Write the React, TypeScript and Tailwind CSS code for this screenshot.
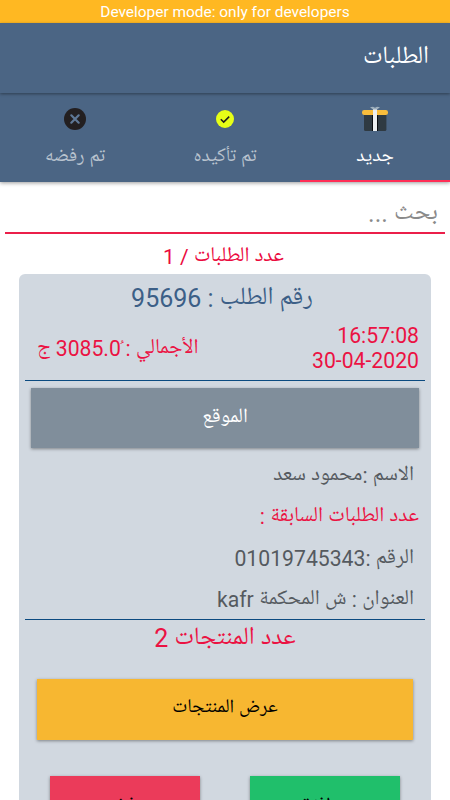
import type { ReactNode } from "react";

function GiftIcon() {
  return (
    <svg width="26" height="26" viewBox="0 0 26 26">
      <rect x="2" y="6" width="22.400" height="19" rx="1.500" fill="#2f3a42" />
      <rect x="0" y="4" width="26" height="5" rx="2.200" fill="#f9bd3c" />
      <rect x="10" y="9" width="6" height="16" fill="#0b0e12" />
      <rect x="11" y="3" width="4" height="22" fill="#eceff1" />
      <path d="M8 1.300l3-.6 2 1.100 2-1.100 3 .6-3 2.200h-4z" fill="#9fb0bd" />
    </svg>
  );
}

function CheckIcon() {
  return (
    <svg width="18" height="18" viewBox="0 0 18 18">
      <circle cx="9" cy="9" r="9" fill="#e6ff17" />
      <path
        d="M4.800 9.200l2.900 2.900 5.500-5.500"
        fill="none"
        stroke="#1d1d1b"
        strokeWidth="1.500"
      />
    </svg>
  );
}

function CrossIcon() {
  return (
    <svg width="22" height="22" viewBox="0 0 22 22">
      <circle cx="11" cy="11" r="11" fill="#231f20" />
      <path
        d="M7.300 7.300l7.400 7.400M14.700 7.300l-7.400 7.400"
        stroke="#5f7896"
        strokeWidth="2.200"
        strokeLinecap="round"
      />
    </svg>
  );
}

function Tab({
  icon,
  label,
  active,
}: {
  icon: ReactNode;
  label: string;
  active?: boolean;
}) {
  return (
    <div
      className={`flex flex-1 flex-col items-center border-b-2 pt-[13px] ${
        active ? "border-[#ff2d55] text-white" : "border-transparent text-[#b9c3cf]"
      }`}
    >
      <span className="flex h-[26px] items-center">{icon}</span>
      <span className="mt-[14px] text-[19.500px] leading-[24px]">{label}</span>
    </div>
  );
}

export default function App() {
  return (
    <div
      dir="rtl"
      className="flex h-[800px] w-[450px] flex-col overflow-hidden bg-white font-['Roboto','Noto_Naskh_Arabic_UI','Noto_Naskh_Arabic','Noto_Sans_Arabic','DejaVu_Sans',sans-serif]"
    >
      <div
        dir="ltr"
        className="h-[23px] shrink-0 bg-[#ffb822] text-center text-[15.450px] leading-[25px] text-white"
      >
        Developer mode: only for developers
      </div>
      <header className="relative z-10 h-[70px] shrink-0 bg-[#4b6584] px-[21px] text-[25px] leading-[69px] text-white shadow-[0_1px_3px_rgba(0,0,0,0.4)]">
        الطلبات
      </header>
      <nav className="flex h-[89px] shrink-0 bg-[#4b6584] shadow-[0_1px_4px_rgba(0,0,0,0.4)]">
        <Tab icon={<GiftIcon />} label="جديد" active />
        <Tab icon={<CheckIcon />} label="تم تأكيده" />
        <Tab icon={<CrossIcon />} label="تم رفضه" />
      </nav>

      <div className="mx-[5px] h-[52px] shrink-0 border-b-2 border-[#eb1f4a] px-[7px] pt-[16px] text-[25px] leading-[32px] text-[#8a8a8a]">
        بحث ...
      </div>
      <div className="h-[40px] shrink-0 pr-[3px] text-center text-[21px] leading-[47px] text-[#eb0a3e]">
        عدد الطلبات / 1
      </div>

      <main className="mx-[19px] flex h-[526px] shrink-0 flex-col rounded-t-[6px] bg-[#d1d8e0] px-[6px]">
        <div className="h-[46px] shrink-0 pr-[6px] text-center text-[25px] leading-[49px] text-[#3c5f87]">
          رقم الطلب : 95696
        </div>
        <div className="flex h-[61px] shrink-0 items-center justify-between border-b border-[#0b4a80] pr-[6px] pl-[12px] text-[#eb1243]">
          <div dir="ltr" className="pb-[4px] text-right text-[21.200px] leading-[25px]">
            16:57:08
            <br />
            30-04-2020
          </div>
          <div className="pb-[3px] text-[21.200px]">الأجمالي :&nbsp;ُ3085.0 ج</div>
        </div>
        <button className="mx-[6px] mt-[7px] h-[60px] shrink-0 bg-[#808e9b] text-[20.500px] text-white shadow-[0_1px_3px_rgba(0,0,0,0.4)]">
          الموقع
        </button>
        <div className="h-[172px] shrink-0 border-b border-[#0b4a80] px-[11px] pt-[7px] text-[21.200px] leading-[41.300px] text-[#555a5f]">
          <p>الاسم :محمود سعد</p>
          <p className="-mr-[5px] text-[#eb1243]">عدد الطلبات السابقة :</p>
          <p>الرقم :01019745343</p>
          <p>العنوان : ش المحكمة kafr</p>
        </div>
        <div className="h-[59px] shrink-0 text-center text-[25px] leading-[37px] text-[#eb1243]">
          عدد المنتجات 2
        </div>
        <button className="mx-[12px] h-[61px] shrink-0 bg-[#f7b731] text-[19.300px] text-black shadow-[0_1px_3px_rgba(0,0,0,0.4)]">
          عرض المنتجات
        </button>
        <div className="mt-[36px] flex shrink-0 justify-between px-[25px]">
          <button className="h-[60px] w-[150px] bg-[#20bf6b] pt-[3px] text-[19.300px] text-black shadow-[0_1px_3px_rgba(0,0,0,0.4)]">
            موافقة
          </button>
          <button className="h-[60px] w-[150px] bg-[#eb3b5a] pt-[3px] text-[19.300px] text-black shadow-[0_1px_3px_rgba(0,0,0,0.4)]">
            رفض
          </button>
        </div>
      </main>
    </div>
  );
}
